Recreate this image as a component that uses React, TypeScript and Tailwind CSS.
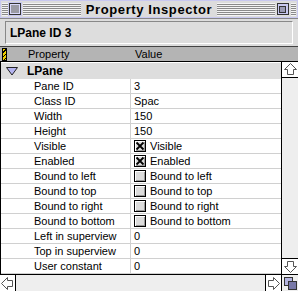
// Property Inspector window

import React from 'react';

interface Row {
  label: string;
  value?: string;
  check?: boolean;
}

const rows: Row[] = [
  { label: 'Pane ID', value: '3' },
  { label: 'Class ID', value: 'Spac' },
  { label: 'Width', value: '150' },
  { label: 'Height', value: '150' },
  { label: 'Visible', value: 'Visible', check: true },
  { label: 'Enabled', value: 'Enabled', check: true },
  { label: 'Bound to left', value: 'Bound to left', check: false },
  { label: 'Bound to top', value: 'Bound to top', check: false },
  { label: 'Bound to right', value: 'Bound to right', check: false },
  { label: 'Bound to bottom', value: 'Bound to bottom', check: false },
  { label: 'Left in superview', value: '0' },
  { label: 'Top in superview', value: '0' },
  { label: 'User constant', value: '0' },
];

const Stripes: React.FC<{ className?: string }> = ({ className }) => (
  <div
    className={`h-[13px] bg-[repeating-linear-gradient(to_bottom,#f4f4f4_0,#f4f4f4_1px,#8a8a8a_1px,#8a8a8a_2px)] ${className ?? ''}`}
  />
);

const CheckBox: React.FC<{ on: boolean }> = ({ on }) => (
  <div className="w-[12px] h-[12px] border border-black bg-[#dcdcdc] shadow-[inset_1px_1px_0_#fff,inset_-1px_-1px_0_#999] flex items-center justify-center">
    {on && (
      <svg width="10" height="10" viewBox="0 0 10 10">
        <path d="M1.5 1.5 L8.5 8.5 M8.5 1.5 L1.5 8.5" stroke="#000" strokeWidth="1.8" />
      </svg>
    )}
  </div>
);

const Arrow: React.FC<{ dir: 'up' | 'down' | 'left' | 'right' }> = ({ dir }) => {
  const rot = { up: 0, right: 90, down: 180, left: 270 }[dir];
  return (
    <svg width="15" height="15" viewBox="0 0 15 15">
      <polygon
        points="7.5,1.5 13.5,7.5 10.5,7.5 10.5,12.5 4.5,12.5 4.5,7.5 1.5,7.5"
        fill="#fff"
        stroke="#555"
        strokeWidth="1"
        transform={`rotate(${rot} 7.5 7.5)`}
      />
    </svg>
  );
};

const App: React.FC = () => {
  return (
    <div className="w-[298px] h-[291px] bg-[#dddddd] flex flex-col overflow-hidden font-['Liberation_Sans',Arial,sans-serif] text-[11px] text-black">
      {/* Title bar */}
      <div className="h-[19px] flex items-center border-b border-[#888] bg-[#dcdcdc] shadow-[inset_0_0_0_1px_#c8c8f0]">
        <Stripes className="w-[6px] ml-[2px]" />
        <div className="w-[12px] h-[12px] mx-[1px] border border-[#333] bg-[#9a9aa4] shadow-[inset_0_0_0_1px_#d8d8f8] outline outline-1 outline-[#c8c8f0]" />
        <Stripes className="flex-1 ml-[1px]" />
        <div className="px-[5px] text-[13px] font-bold tracking-[0.6px] leading-none">Property Inspector</div>
        <Stripes className="flex-1" />
        <div className="w-[12px] h-[12px] mx-[2px] border border-[#333] bg-[#c8c8f0] flex items-end justify-start">
          <div className="w-[7px] h-[7px] border border-[#333] bg-[#9a9ab4] ml-[1px] mb-[1px]" />
        </div>
        <Stripes className="w-[5px] mr-[2px]" />
      </div>

      {/* Name field */}
      <div className="h-[28px] px-[5px] pt-[2px] pb-[2px] border-b border-[#444]">
        <div className="h-full border border-t-[#888] border-l-[#888] border-b-white border-r-white flex items-center pl-[4px] font-bold text-[12px]">
          LPane ID 3
        </div>
      </div>

      {/* Column header */}
      <div className="h-[15px] bg-[#b4b4b4] border-b border-black flex items-center">
        <div className="w-[5px] h-[13px] ml-[2px] border border-black bg-[repeating-linear-gradient(135deg,#f0d000_0,#f0d000_2px,#000_2px,#000_3px)]" />
        <div className="w-[124px] pl-[21px]">Property</div>
        <div className="pl-[4px]">Value</div>
      </div>

      {/* Body */}
      <div className="flex-1 flex min-h-0">
        <div className="flex-1 bg-white border-l border-black pt-px overflow-hidden">
          <div className="h-[16px] bg-[#dddddd] flex items-center">
            <svg width="12" height="9" viewBox="0 0 12 9" className="ml-[5px]">
              <polygon points="0.5,0.5 11.5,0.5 6,8" fill="#b4b4f0" stroke="#222" strokeWidth="1" />
            </svg>
            <span className="ml-[9px] font-bold text-[12px]">LPane</span>
          </div>
          {rows.map((r) => (
            <div key={r.label} className="h-[15px] flex border-b border-[#d0d0d0]">
              <div className="w-[130px] pl-[33px] flex items-center border-r border-[#d0d0d0]">{r.label}</div>
              <div className="flex items-center pl-[3px]">
                {r.check !== undefined && (
                  <span className="mr-[4px]">
                    <CheckBox on={r.check} />
                  </span>
                )}
                {r.value}
              </div>
            </div>
          ))}
        </div>
        <div className="w-[17px] bg-[#eeeeee] border-l border-black flex flex-col justify-between">
          <div className="h-[16px] border-b border-black flex items-center justify-center bg-white">
            <Arrow dir="up" />
          </div>
          <div className="h-[16px] border-t border-black flex items-center justify-center bg-white">
            <Arrow dir="down" />
          </div>
        </div>
      </div>

      {/* Horizontal scrollbar */}
      <div className="h-[17px] flex border-t border-black bg-[#eeeeee]">
        <div className="w-[16px] border-r border-black flex items-center justify-center bg-white">
          <Arrow dir="left" />
        </div>
        <div className="flex-1" />
        <div className="w-[16px] border-l border-black flex items-center justify-center bg-white">
          <Arrow dir="right" />
        </div>
        <div className="w-[17px] border-l border-black flex items-center justify-center bg-[#eeeeee]">
          <svg width="13" height="13" viewBox="0 0 13 13">
            <rect x="0.5" y="0.5" width="8" height="8" fill="#b4b4e0" stroke="#333" />
            <rect x="4.5" y="4.5" width="8" height="8" fill="#7878a8" stroke="#333" />
          </svg>
        </div>
      </div>
    </div>
  );
};

export default App;
